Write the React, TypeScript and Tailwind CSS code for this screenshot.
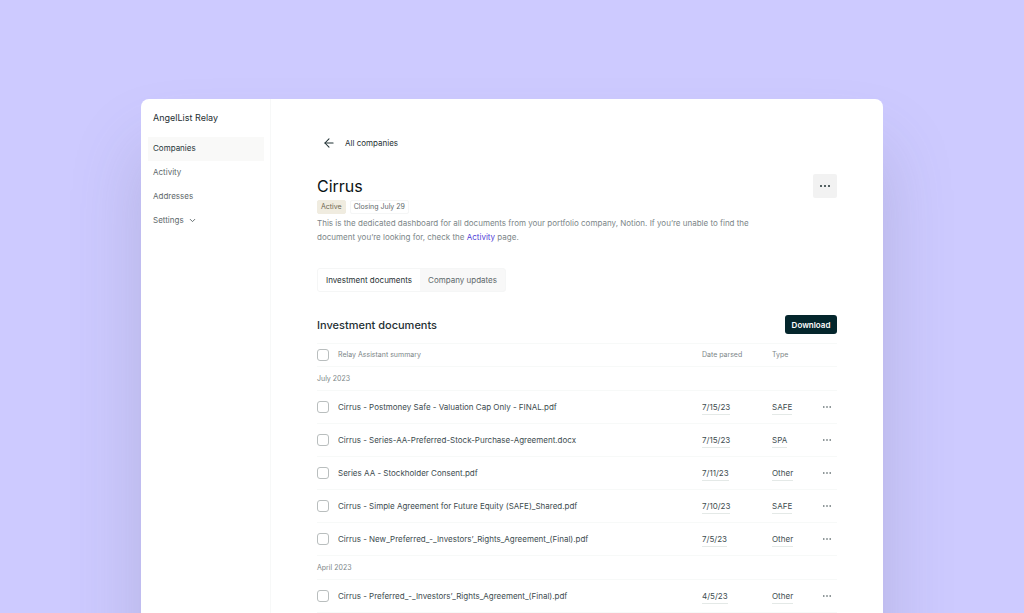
import { ArrowLeft, ChevronDown } from "lucide-react";
import { useState } from "react";

const NAV_ITEMS = [
  { label: "Companies", active: true },
  { label: "Activity" },
  { label: "Addresses" },
  { label: "Settings", expandable: true },
];

const GROUPS = [
  {
    month: "July 2023",
    docs: [
      { name: "Cirrus - Postmoney Safe - Valuation Cap Only - FINAL.pdf", date: "7/15/23", type: "SAFE" },
      { name: "Cirrus - Series-AA-Preferred-Stock-Purchase-Agreement.docx", date: "7/15/23", type: "SPA" },
      { name: "Series AA - Stockholder Consent.pdf", date: "7/11/23", type: "Other" },
      { name: "Cirrus - Simple Agreement for Future Equity (SAFE)_Shared.pdf", date: "7/10/23", type: "SAFE" },
      { name: "Cirrus - New_Preferred_-_Investors’_Rights_Agreement_(Final).pdf", date: "7/5/23", type: "Other" },
    ],
  },
  {
    month: "April 2023",
    docs: [
      { name: "Cirrus - Preferred_-_Investors’_Rights_Agreement_(Final).pdf", date: "4/5/23", type: "Other" },
    ],
  },
];

const TABS = ["Investment documents", "Company updates"];

function Dots({ className }: { className: string }) {
  return (
    <svg viewBox="0 0 10 2" className={className} fill="currentColor" aria-hidden="true">
      <circle cx="1" cy="1" r="1" />
      <circle cx="5" cy="1" r="1" />
      <circle cx="9" cy="1" r="1" />
    </svg>
  );
}

function Checkbox({ label }: { label: string }) {
  return (
    <input
      type="checkbox"
      aria-label={label}
      className="block w-3 h-3 appearance-none rounded-[3px] border border-[#b9bebe] bg-white checked:bg-[#04262c]"
    />
  );
}

function Sidebar() {
  return (
    <aside className="w-[130px] shrink-0 border-r border-[#f7f8f8] px-[7px] pt-[13px]">
      <div className="px-[5px] text-[9px] leading-3 text-[#1f3033]">AngelList Relay</div>
      <nav className="mt-[13px] mr-[-1px] flex flex-col">
        {NAV_ITEMS.map((item) => (
          <a
            key={item.label}
            href="#"
            className={`flex h-6 items-center gap-1 px-[5px] pb-0.5 text-[8px] ${
              item.active ? "bg-[#f9f9f8] text-[#27373a]" : "text-[#5e696b]"
            }`}
          >
            {item.label}
            {item.expandable && <ChevronDown className="w-[9px] h-[9px]" strokeWidth={2.5} />}
          </a>
        ))}
      </nav>
    </aside>
  );
}

function DocumentsTable() {
  return (
    <table className="mt-[9px] w-full table-fixed border-collapse text-left text-[8px] leading-3">
      <colgroup>
        <col className="w-[21px]" />
        <col />
        <col className="w-[70px]" />
        <col className="w-[45px]" />
        <col className="w-5" />
      </colgroup>
      <thead>
        <tr className="h-[23px] border-y border-[#f7f9f8] text-[7px] text-[#7c8688]">
          <th><Checkbox label="Select all documents" /></th>
          <th className="font-normal">Relay Assistant summary</th>
          <th className="font-normal">Date parsed</th>
          <th className="font-normal">Type</th>
          <th />
        </tr>
      </thead>
      {GROUPS.map((group) => (
        <tbody key={group.month}>
          <tr className="h-6 border-b border-[#f7f9f8]">
            <th colSpan={5} scope="rowgroup" className="text-[7px] font-normal text-[#7c8688]">{group.month}</th>
          </tr>
          {group.docs.map((doc) => (
            <tr key={doc.name} className="h-[33px] border-b border-[#f7f9f8] text-[#3d4c4f]">
              <td><Checkbox label={doc.name} /></td>
              <td className="truncate">{doc.name}</td>
              <td>
                <span className="border-b border-[#e4e9e7] pb-[2px]">{doc.date}</span>
              </td>
              <td>
                <span className="border-b border-[#e4e9e7] pb-[2px]">{doc.type}</span>
              </td>
              <td>
                <button aria-label={`Options for ${doc.name}`} className="flex h-4 w-5 items-center justify-center">
                  <Dots className="h-[2px] w-2" />
                </button>
              </td>
            </tr>
          ))}
        </tbody>
      ))}
    </table>
  );
}

export default function App() {
  const [tab, setTab] = useState(TABS[0]);

  return (
    <div className="flex h-screen justify-center overflow-hidden bg-[#cdcaff] pt-[99px] font-['Inter','Liberation_Sans',sans-serif]">
      <div className="flex h-[640px] w-full max-w-[742px] rounded-t-lg bg-white shadow-[0_50px_70px_rgba(90,90,120,0.22)]">
        <Sidebar />

        <main className="min-w-0 flex-1 px-[46px] pt-[38px]">
          <a href="#" className="flex h-3 w-fit items-center gap-[9px] pl-[5px] text-[8px] text-[#1f3033]">
            <ArrowLeft className="w-[14px] h-[14px]" strokeWidth={1.8} />
            All companies
          </a>

          {/* Company header */}
          <div className="mt-[25px] flex items-center justify-between">
            <h1 className="text-base leading-6 text-[#0b1214]">Cirrus</h1>
            <button aria-label="Company options" className="flex h-6 w-6 items-center justify-center rounded-[2px] bg-[#f2f2f2] text-[#1f3033]">
              <Dots className="h-[2px] w-[10px]" />
            </button>
          </div>
          <div className="mt-[2px] flex gap-1 text-[7px] leading-3">
            <span className="rounded-[2px] border border-[#f0ece0] bg-[#f0ece0] px-[3px] text-[#6d6750]">Active</span>
            <span className="rounded-[2px] border border-[#f5f6f6] px-[3px] text-[#5e696b]">Closing July 29</span>
          </div>
          <p className="mt-[2px] max-w-[440px] text-[8px] leading-[14px] text-[#7c8688]">
            This is the dedicated dashboard for all documents from your portfolio company, Notion. If you’re unable to find the
            document you’re looking for, check the <a href="#" className="text-[#5140d8]">Activity</a> page.
          </p>

          <div className="mt-6 flex h-6 w-fit overflow-hidden rounded-[3px] border border-[#f5f6f6] bg-[#f8f8f8] text-[8px]">
            {TABS.map((name) => (
              <button
                key={name}
                onClick={() => setTab(name)}
                className={`px-2 ${tab === name ? "bg-white text-[#1f3033]" : "text-[#5e696b]"}`}
              >
                {name}
              </button>
            ))}
          </div>

          {/* Documents */}
          <div className="mt-[23px] flex items-center justify-between">
            <h2 className="text-[11px] leading-4 font-medium text-[#1f3033]">Investment documents</h2>
            <button className="h-[19px] w-[52px] rounded-[3px] bg-[#04262c] text-[8px] font-semibold text-white">Download</button>
          </div>
          <DocumentsTable />
        </main>
      </div>
    </div>
  );
}
